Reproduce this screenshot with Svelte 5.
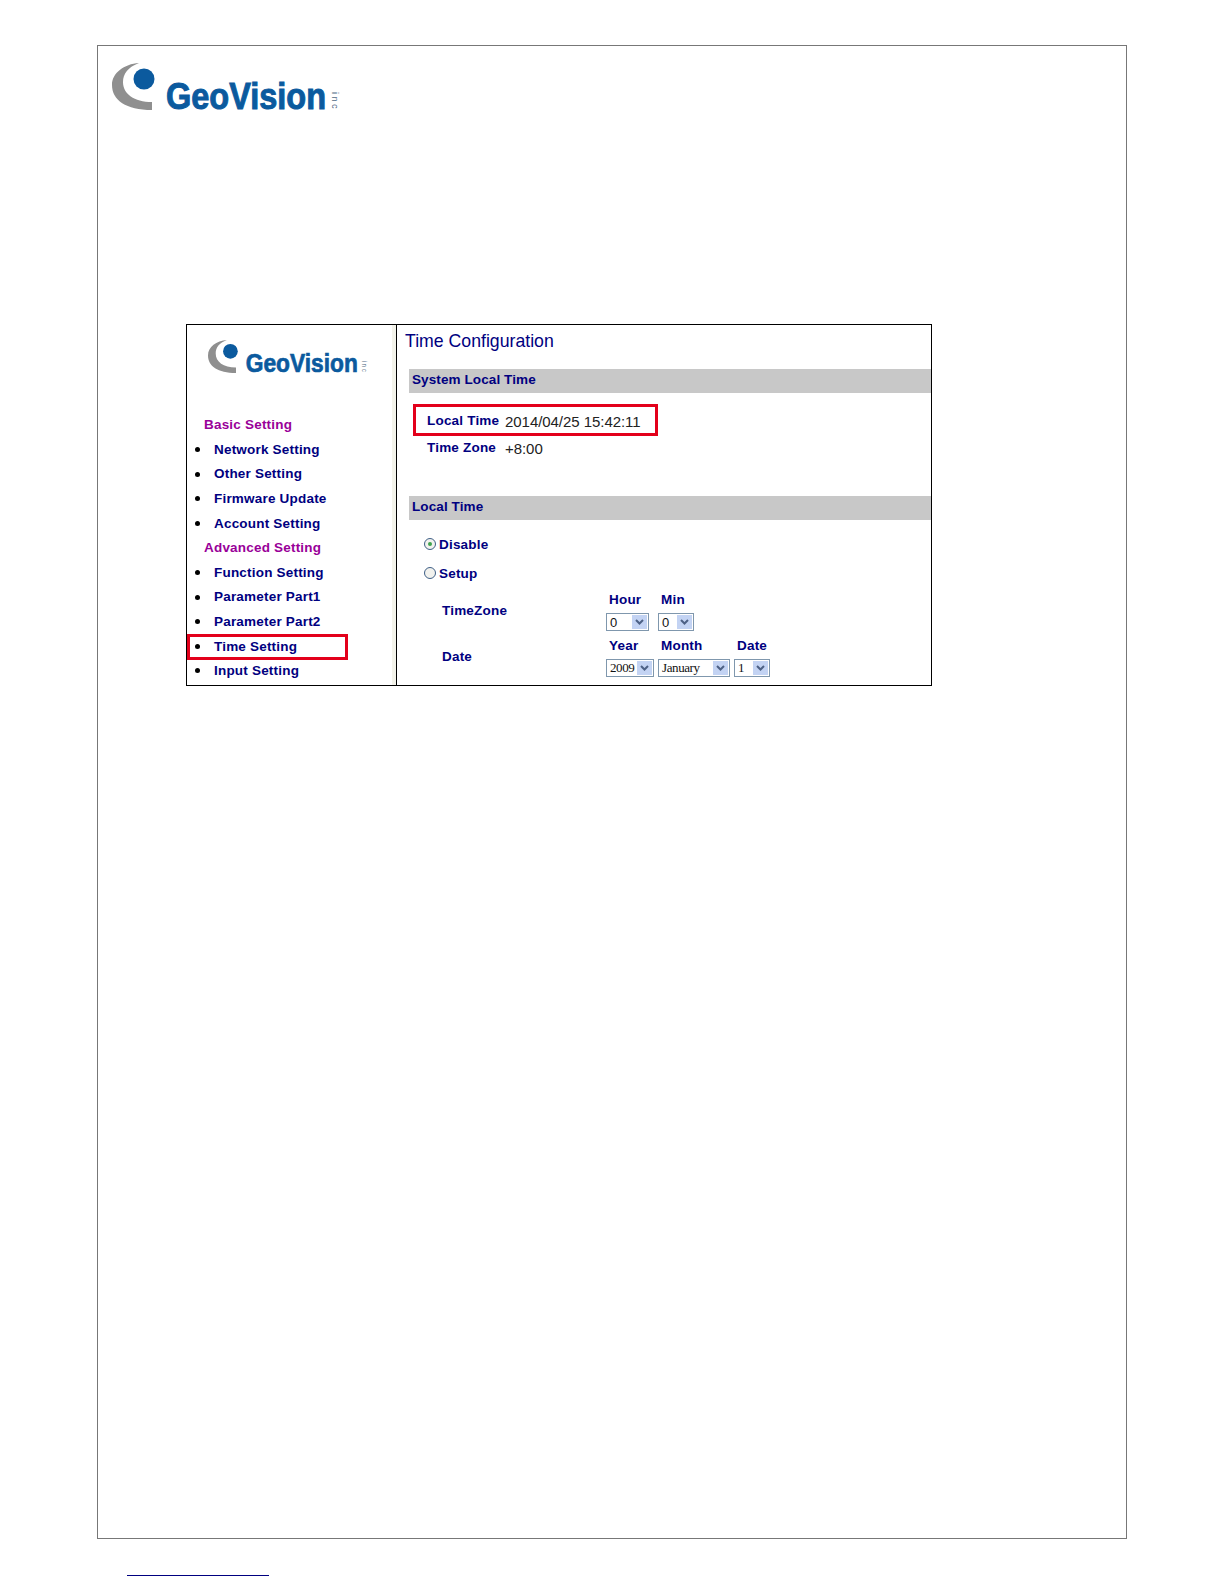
<script>
	const menu = [
		{ label: 'Basic Setting', head: true },
		{ label: 'Network Setting' },
		{ label: 'Other Setting' },
		{ label: 'Firmware Update' },
		{ label: 'Account Setting' },
		{ label: 'Advanced Setting', head: true },
		{ label: 'Function Setting' },
		{ label: 'Parameter Part1' },
		{ label: 'Parameter Part2' },
		{ label: 'Time Setting', marked: true },
		{ label: 'Input Setting' }
	];
</script>

{#snippet logo(cls)}
	<svg class={cls} viewBox="0 0 250 60" role="img" aria-label="GeoVision logo">
		<path d="M27 3C12 4 0 13 0 25C0 40 14 50 40 50L40 42C22 42 11 34 11 22C11 14 16 7 27 3Z" fill="#8f8f8f" />
		<circle cx="32" cy="19" r="10.5" fill="#0b5a9e" />
		<text x="54" y="49" class="logo-name" textLength="160" lengthAdjust="spacingAndGlyphs">GeoVision</text>
		<text x="0" y="0" class="logo-inc" transform="translate(220 32) rotate(90)">inc</text>
	</svg>
{/snippet}

{#snippet select(value, width, serif = false)}
	<div class="select" class:serif style="width: {width}px">
		<span class="value">{value}</span>
		<span class="arrow">
			<svg viewBox="0 0 9 6" width="9" height="6"><path d="M1 1L4.5 4.5L8 1" fill="none" stroke="#4d6185" stroke-width="2" /></svg>
		</span>
	</div>
{/snippet}

<div class="sheet">
	<div class="frame">
		{@render logo('logo-big')}

		<div class="shot">
			<aside class="sidebar">
				{@render logo('logo-small')}
				<ul class="menu">
					{#each menu as item}
						<li class:head={item.head} class:marked={item.marked}>{item.label}</li>
					{/each}
				</ul>
			</aside>

			<main class="content">
				<h1>Time Configuration</h1>

				<div class="bar first">System Local Time</div>
				<div class="info">
					<div class="info-row marked-row">
						<b>Local Time</b><span>2014/04/25 15:42:11</span>
					</div>
					<div class="info-row">
						<b>Time Zone</b><span>+8:00</span>
					</div>
				</div>

				<div class="bar">Local Time</div>
				<div class="radios">
					<div class="radio-row"><span class="radio on"></span>Disable</div>
					<div class="radio-row"><span class="radio"></span>Setup</div>
				</div>

				<div class="form">
					<div class="form-label">TimeZone</div>
					<div class="fields wide">
						<div class="field"><b>Hour</b>{@render select('0', 43)}</div>
						<div class="field"><b>Min</b>{@render select('0', 36)}</div>
					</div>
					<div class="form-label">Date</div>
					<div class="fields">
						<div class="field"><b>Year</b>{@render select('2009', 48, true)}</div>
						<div class="field"><b>Month</b>{@render select('January', 72, true)}</div>
						<div class="field"><b>Date</b>{@render select('1', 36, true)}</div>
					</div>
				</div>
			</main>
		</div>
	</div>

	<div class="footnote-rule"></div>
</div>

<style>
	:global(body) {
		background: #fff;
	}

	.sheet {
		box-sizing: border-box;
		width: 1224px;
		height: 1584px;
		padding: 45px 0 0 97px;
		font-family: 'Liberation Sans', Arial, sans-serif;
		color: #000080;
	}

	.frame {
		box-sizing: border-box;
		width: 1030px;
		height: 1494px;
		border: 1px solid #777;
		padding: 14px 0 0 14px;
	}

	.logo-big {
		display: block;
		width: 250px;
		height: 60px;
	}

	.logo-small {
		display: block;
		width: 175px;
		height: 42px;
	}

	.logo-name {
		font-family: 'Liberation Sans', Arial, sans-serif;
		font-size: 37px;
		font-weight: 700;
		fill: #0b5a9e;
		stroke: #0b5a9e;
		stroke-width: 1px;
	}

	.logo-inc {
		font-family: 'Liberation Sans', Arial, sans-serif;
		font-size: 9px;
		letter-spacing: 2.5px;
		fill: #4f6a85;
	}

	.shot {
		box-sizing: border-box;
		display: flex;
		width: 746px;
		height: 362px;
		margin: 204px 0 0 74px;
		border: 1px solid #000;
		overflow: hidden;
	}

	.sidebar {
		box-sizing: border-box;
		flex: 0 0 210px;
		padding-top: 13px;
		padding-left: 21px;
		border-right: 1px solid #000;
		box-shadow: inset -4px 0 0 #f3f3ea;
	}

	.menu {
		list-style: none;
		margin: 32.4px 0 0 -21px;
		padding: 0;
		display: grid;
		grid-auto-rows: 24.6px;
	}

	.menu li {
		position: relative;
		display: flex;
		align-items: center;
		padding-left: 27px;
		font-size: 13.5px;
		font-weight: 700;
		letter-spacing: 0.2px;
		white-space: nowrap;
	}

	.menu li::before {
		content: '';
		position: absolute;
		left: 8px;
		top: 10px;
		width: 5px;
		height: 5px;
		border-radius: 50%;
		background: #000;
	}

	.menu li.head {
		padding-left: 17px;
		color: #990099;
	}

	.menu li.head::before {
		display: none;
	}

	.menu li.marked::after {
		content: '';
		position: absolute;
		left: 0;
		top: 0;
		width: 161px;
		height: 26px;
		box-sizing: border-box;
		border: 3px solid #e3001b;
	}

	.content {
		flex: 1;
		min-width: 0;
	}

	h1 {
		margin: 0;
		padding: 5px 0 0 8px;
		height: 44px;
		box-sizing: border-box;
		font-size: 17.7px;
		font-weight: 400;
		line-height: 22px;
	}

	.bar {
		box-sizing: border-box;
		height: 24px;
		margin-left: 12px;
		padding-left: 3px;
		background: #c8c8c8;
		font-size: 13.5px;
		font-weight: 700;
		line-height: 22px;
		letter-spacing: 0.1px;
	}

	.info {
		height: 103px;
		padding: 14px 0 0 4px;
		box-sizing: border-box;
	}

	.info-row {
		position: relative;
		display: grid;
		grid-template-columns: 78px auto;
		align-items: center;
		height: 27px;
		margin-left: 26px;
		font-size: 13.5px;
		letter-spacing: 0.2px;
	}

	.info-row span {
		font-size: 15px;
		color: #222;
		letter-spacing: -0.05px;
		padding-top: 2px;
	}

	.marked-row::after {
		content: '';
		position: absolute;
		left: -14px;
		top: -3px;
		width: 245px;
		height: 32px;
		box-sizing: border-box;
		border: 3px solid #e3001b;
	}

	.radios {
		padding: 10px 0 0 27px;
		font-size: 13.5px;
		font-weight: 700;
		letter-spacing: 0.2px;
	}

	.radio-row {
		display: flex;
		align-items: center;
		gap: 3px;
		height: 29px;
	}

	.radio {
		position: relative;
		box-sizing: border-box;
		width: 12px;
		height: 12px;
		margin-top: -2px;
		border: 1px solid #3f5f86;
		border-radius: 50%;
		background: #f2f2ee;
	}

	.radio.on::after {
		content: '';
		position: absolute;
		left: 3px;
		top: 3px;
		width: 4px;
		height: 4px;
		border-radius: 50%;
		background: #3fa34d;
	}

	.form {
		display: grid;
		grid-template-columns: 164px auto;
		grid-auto-rows: 45.5px;
		padding: 0 0 0 45px;
		margin-top: 4px;
		font-size: 13.5px;
		font-weight: 700;
		letter-spacing: 0.2px;
	}

	.form-label {
		padding-top: 11px;
	}

	.fields {
		display: flex;
		gap: 4px;
	}

	.fields.wide {
		gap: 9px;
	}

	.field {
		display: flex;
		flex-direction: column;
		gap: 5px;
	}

	.field b {
		padding-left: 3px;
		line-height: 16px;
	}

	.select {
		box-sizing: border-box;
		display: flex;
		align-items: center;
		justify-content: space-between;
		height: 18px;
		padding: 1px;
		border: 1px solid #7f97ad;
		background: #fff;
		font-size: 13px;
		font-weight: 400;
		letter-spacing: 0;
		color: #111;
	}

	.select.serif {
		font-family: 'Liberation Serif', 'Times New Roman', serif;
		letter-spacing: -0.4px;
	}

	.value {
		padding-left: 2px;
	}

	.arrow {
		display: flex;
		align-items: center;
		justify-content: center;
		width: 15px;
		height: 14px;
		background: #c3d3f3;
	}

	.footnote-rule {
		width: 142px;
		height: 1px;
		margin: 36px 0 0 30px;
		background: #000080;
	}
</style>
